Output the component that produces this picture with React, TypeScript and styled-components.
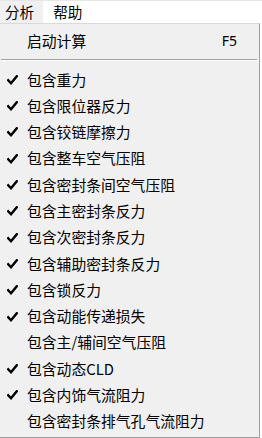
import React from "react";
import styled, { createGlobalStyle } from "styled-components";

const GlobalStyle = createGlobalStyle`
  html, body { margin: 0; padding: 0; background: #ffffff; }
  body { font-family: "Noto Sans CJK SC", "Noto Sans", sans-serif; }
  #root { width: 262px; height: 438px; overflow: hidden; }
`;

const Frame = styled.div`
  width: 262px;
  height: 438px;
  display: flex;
  flex-direction: column;
  background: #ffffff;
`;

const MenuBar = styled.div`
  height: 22px;
  border-top: 1px solid #e6e6e6;
  display: flex;
  align-items: stretch;
  background: #ffffff;
`;

const MenuTitle = styled.div<{ $active?: boolean }>`
  display: flex;
  align-items: center;
  padding: 0 ${(p) => (p.$active ? "9px" : "8px")} 0 ${(p) => (p.$active ? "5px" : "10px")};
  font-size: 14.6px;
  color: #000;
  background: ${(p) => (p.$active ? "#f0f0f0" : "transparent")};
  line-height: 1;
`;

const Dropdown = styled.div`
  width: 259px;
  height: 412px;
  background: #f0f0f0;
  border-top: 1px solid #dadada;
  border-right: 1px solid #a0a0a0;
  border-bottom: 1px solid #a0a0a0;
  padding-top: 2px;
  display: flex;
  flex-direction: column;
  box-sizing: content-box;
`;

const Row = styled.div<{ $h: number }>`
  height: ${(p) => p.$h}px;
  display: grid;
  grid-template-columns: 27px 1fr auto;
  align-items: center;
  font-size: 14.8px;
  color: #000;
  white-space: nowrap;
`;

const CheckCell = styled.div`
  display: flex;
  justify-content: flex-start;
  padding-left: 7px;
  align-items: center;
`;

const Label = styled.span`
  line-height: 1;
`;

const Shortcut = styled.span`
  font-family: "Noto Sans", "Liberation Sans", sans-serif;
  font-size: 14px;
  padding-right: 22px;
  line-height: 1;
`;

const Separator = styled.div`
  margin: 3px 2px 5.8px 1px;
  height: 1px;
  background: #a0a0a0;
  border-bottom: 1px solid #ffffff;
`;

const Check = () => (
  <svg width="11" height="10" viewBox="0 0 11 10">
    <path d="M1.2 5.2 L4 8.2 L9.8 1.2" fill="none" stroke="#000" strokeWidth="2.4" strokeLinecap="square" strokeLinejoin="miter" />
  </svg>
);

const items: { label: string; checked: boolean }[] = [
  { label: "包含重力", checked: true },
  { label: "包含限位器反力", checked: true },
  { label: "包含铰链摩擦力", checked: true },
  { label: "包含整车空气压阻", checked: true },
  { label: "包含密封条间空气压阻", checked: true },
  { label: "包含主密封条反力", checked: true },
  { label: "包含次密封条反力", checked: true },
  { label: "包含辅助密封条反力", checked: true },
  { label: "包含锁反力", checked: true },
  { label: "包含动能传递损失", checked: true },
  { label: "包含主/辅间空气压阻", checked: false },
  { label: "包含动态CLD", checked: true },
  { label: "包含内饰气流阻力", checked: true },
  { label: "包含密封条排气孔气流阻力", checked: false },
];

export default function App() {
  return (
    <>
      <GlobalStyle />
      <Frame>
        <MenuBar>
          <MenuTitle $active>分析</MenuTitle>
          <MenuTitle>帮助</MenuTitle>
        </MenuBar>
        <Dropdown>
          <Row $h={30}>
            <CheckCell />
            <Label>启动计算</Label>
            <Shortcut>F5</Shortcut>
          </Row>
          <Separator />
          {items.map((it) => (
            <Row $h={26.3} key={it.label}>
              <CheckCell>{it.checked ? <Check /> : null}</CheckCell>
              <Label>{it.label}</Label>
              <span />
            </Row>
          ))}
        </Dropdown>
      </Frame>
    </>
  );
}
